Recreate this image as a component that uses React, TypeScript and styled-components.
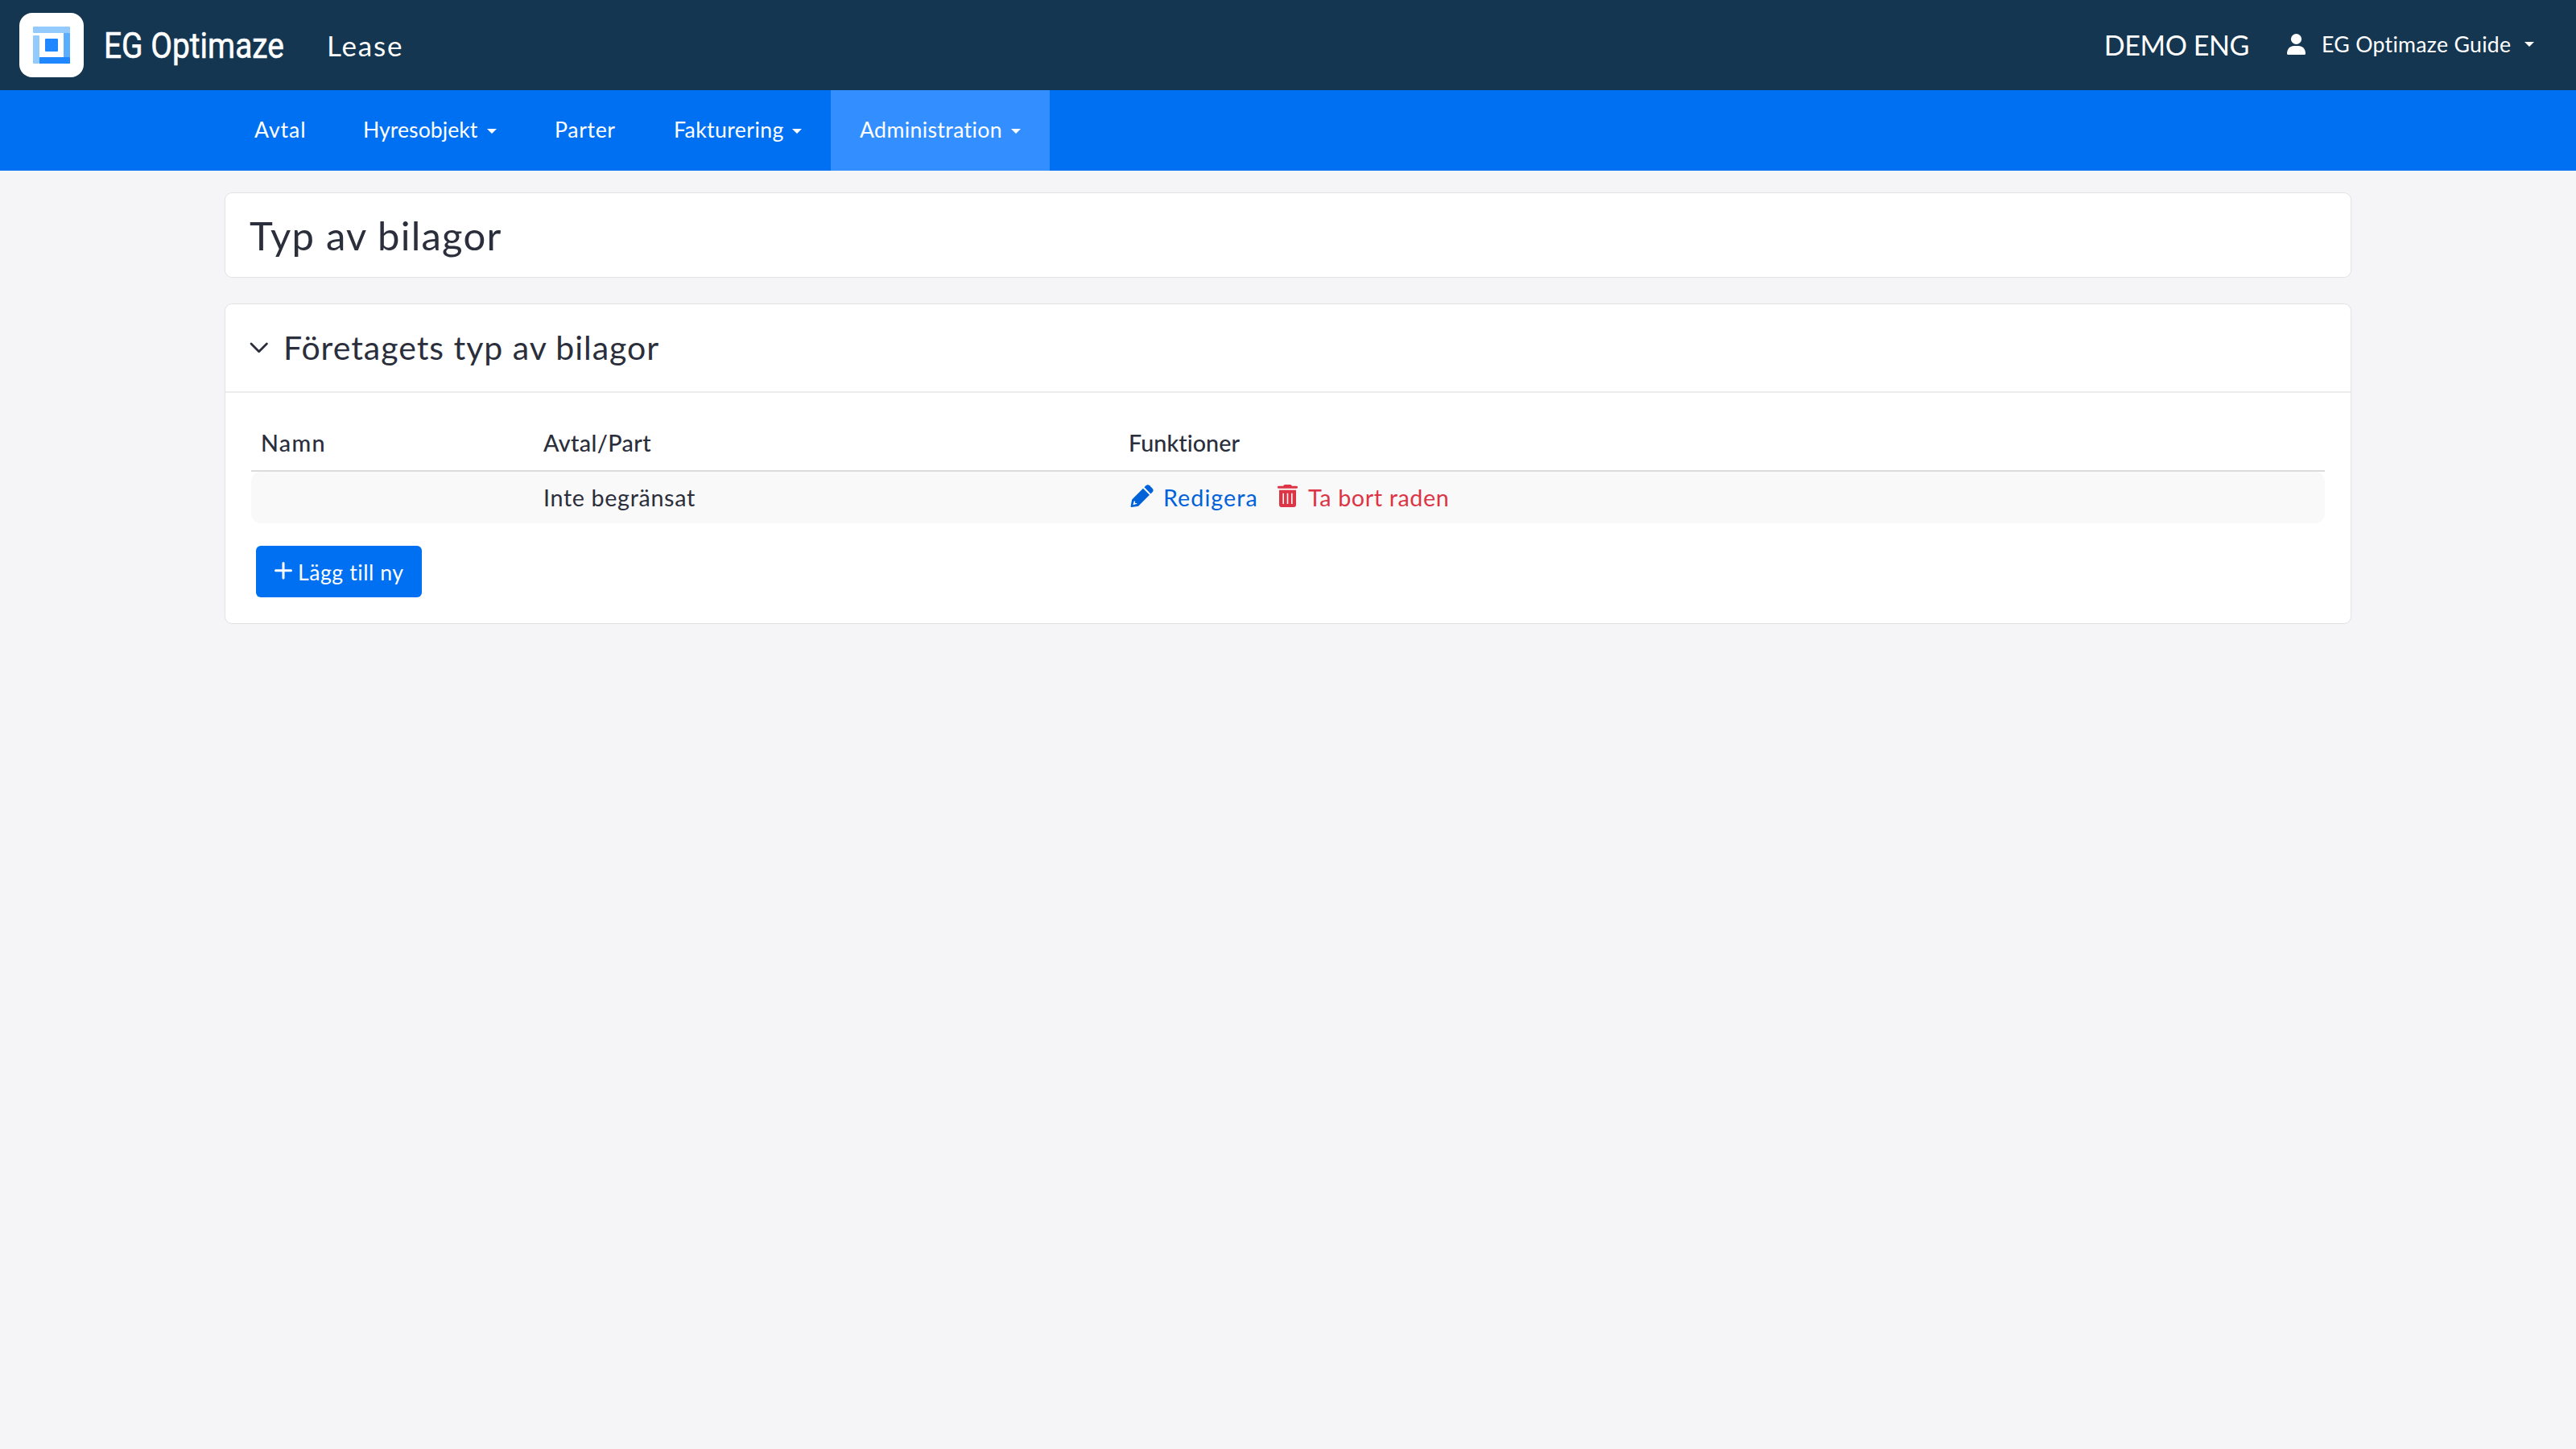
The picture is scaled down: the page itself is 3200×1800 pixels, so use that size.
import React from "react";
import styled, { createGlobalStyle } from "styled-components";

const color = {
  header: "#153650",
  nav: "#0070f3",
  navActive: "#338fff",
  page: "#f5f5f8",
  text: "#2b2e3b",
  link: "#0062d9",
  danger: "#dc3545",
};

const GlobalStyle = createGlobalStyle`
  *, *::before, *::after { box-sizing: border-box; }
  body {
    margin: 0;
    background: ${color.page};
    color: ${color.text};
    font-family: Lato, "Open Sans", sans-serif;
    font-size: 28px;
    line-height: 1.2;
  }
  svg { flex: none; }
`;

const Page = styled.div`
  min-height: 1800px;
`;

const Label = styled.span<{ $size?: number; $spacing?: number; $weight?: number }>`
  font-size: ${p => p.$size ?? 28.7}px;
  font-weight: ${p => p.$weight ?? 400};
  font-variant-ligatures: none;
  letter-spacing: ${p => p.$spacing ?? 0}px;
  white-space: nowrap;
`;

const TopBar = styled.header`
  display: flex;
  align-items: center;
  height: 112px;
  padding: 0 52px 0 24px;
  background: ${color.header};
  color: #fff;
`;

const LogoTile = styled.div`
  display: flex;
  align-items: center;
  justify-content: center;
  width: 80px;
  height: 80px;
  border-radius: 16px;
  background: #fff;
`;

const Wordmark = styled.span`
  width: 223px;
  margin-left: 25px;
  padding-top: 2px;
  font-family: Roboto, sans-serif;
  font-size: 44px;
  white-space: nowrap;
  -webkit-text-stroke: 0.6px #fff;
  transform: scaleX(0.884);
  transform-origin: left center;
`;

const Product = styled.div`
  margin-left: 54px;
`;

const Account = styled.div`
  display: flex;
  align-items: center;
  margin-left: auto;
`;

const UserMenu = styled.div`
  display: flex;
  align-items: center;
  margin-left: 47px;
  padding-bottom: 2px;

  svg {
    margin-right: 20px;
  }
`;

const Caret = styled.i`
  width: 0;
  height: 0;
  margin-left: auto;
  border: solid transparent;
  border-width: 6px 6px 0;
  border-top-color: #fff;
`;

const UserName = styled.div`
  width: 252px;
`;

const NavBar = styled.nav`
  display: flex;
  height: 100px;
  padding-left: 280px;
  background: ${color.nav};
  color: #fff;
`;

const NavItem = styled.div<{ $width: number; $active?: boolean }>`
  display: flex;
  align-items: center;
  width: ${p => p.$width}px;
  padding: 0 36px 3px;
  background: ${p => (p.$active ? color.navActive : "transparent")};

  ${Caret} {
    margin-top: 5px;
  }
`;

const Main = styled.main`
  display: flex;
  flex-direction: column;
  gap: 34px;
  width: 2640px;
  margin: 28px auto 0;
`;

const Card = styled.section`
  border-radius: 8px;
  background: #fff;
  box-shadow: 0 0 0 1px #e2e2e4;
`;

const TitleCard = styled(Card)`
  display: flex;
  align-items: center;
  height: 104px;
  padding: 0 30px 5px;
`;

const Heading = styled.h1`
  margin: 0;
  line-height: 1;
  font-weight: 400;
`;

const CardHead = styled.div`
  display: flex;
  align-items: center;
  height: 110px;
  padding: 0 30px 1px;
  border-bottom: 2px solid #ededed;

  svg {
    margin-right: 18px;
  }
`;

const CardBody = styled.div`
  padding: 26px 32px 32px;
`;

const Row = styled.div`
  display: grid;
  grid-template-columns: 351px 727px 1fr;
  align-items: center;
  height: 64px;
  padding-left: 12px;
`;

const HeadRow = styled(Row)`
  height: 72px;
  padding-top: 2px;
  border-bottom: 2px solid #dcdcdc;
`;

const BodyRow = styled(Row)`
  border-radius: 12px;
  background: #f9f9f9;
`;

const Actions = styled.div`
  display: flex;
  align-items: center;
  padding-left: 2px;
`;

const Action = styled.a<{ $color: string; $gap: number; $width: number }>`
  display: flex;
  align-items: center;
  gap: ${p => p.$gap}px;
  width: ${p => p.$width}px;
  color: ${p => p.$color};

  svg {
    margin-bottom: 4px;
  }
`;

const AddButton = styled.button`
  display: flex;
  align-items: center;
  gap: 6px;
  width: 206px;
  height: 64px;
  margin: 28px 0 0 6px;
  padding: 1px 0 0 22px;
  border: 0;
  border-radius: 6px;
  background: ${color.nav};
  color: #fff;
  font-family: inherit;
  line-height: 1.2;

  svg {
    margin-bottom: 2px;
  }
`;

const LogoMark = () => (
  <svg width="46" height="46" viewBox="0 0 46 46">
    <rect width="46" height="8" rx="1" fill="#93cbff" />
    <rect y="11" width="8" height="35" rx="1" fill="#93cbff" />
    <rect x="38" y="8" width="8" height="31" fill="#5aaeff" />
    <rect x="8" y="38" width="38" height="8" rx="0.6" fill="#1f87ff" />
    <rect x="15" y="15" width="16" height="16" rx="1" fill="#1f87ff" />
  </svg>
);

const UserIcon = () => (
  <svg width="23" height="26" viewBox="0 0 23 26" fill="#fff">
    <ellipse cx="11.5" cy="6.5" rx="6.6" ry="6.5" />
    <path d="M0 24.5C0 18.6 3.8 15 8.8 15h5.4c5 0 8.8 3.6 8.8 9.5 0 .9-.6 1.5-1.5 1.5h-20C.6 26 0 25.4 0 24.5Z" />
  </svg>
);

const ChevronIcon = () => (
  <svg width="24" height="16" viewBox="0 0 24 16" fill="none" stroke={color.text} strokeWidth="2.8" strokeLinecap="round" strokeLinejoin="round">
    <path d="M2 3l9.7 9.7L21.400 3" />
  </svg>
);

const PencilIcon = () => (
  <svg width="29" height="28" viewBox="0 0 29 28" fill={color.link}>
    <path
      fillRule="evenodd"
      d="M16 4.8l8 8L10.6 26.2Q9.900 26.900 9 27.100L1.700 28Q.5 28.100.6 27L1.900 19.700Q2.100 18.700 2.700 18.100ZM4.700 20.800L3.400 25.300 7.900 24.100 8.600 22.900H6V20.300Z"
    />
    <path d="M17.500 3.300l2-2q2.300-2.100 4.700 0l3.400 3.400q2.100 2.400 0 4.600l-2.100 2.100Z" />
  </svg>
);

const TrashIcon = () => (
  <svg width="25" height="28" viewBox="0 0 25 28" fill={color.danger}>
    <path d="M1.400 1.800H7L8.300.3Q8.600 0 9 0h7q.4 0 .7.300L18 1.800h5.600a1.400 1.400 0 010 2.900H1.400a1.400 1.400 0 010-2.900Z" />
    <path
      fillRule="evenodd"
      d="M2 6.800H23V25q0 3-3 3H5q-3 0-3-3ZM6.400 10.700V24h1.600V10.700ZM11.700 10.700V24h1.600V10.700ZM17 10.700V24h1.600V10.700Z"
    />
  </svg>
);

const PlusIcon = () => (
  <svg width="24" height="24" viewBox="0 0 24 24" stroke="#fff" strokeWidth="3" strokeLinecap="round">
    <path d="M12 1.500v18.500M2.500 10.800h19" />
  </svg>
);

const navItems = [
  { label: "Avtal", width: 135, spacing: 0.92 },
  { label: "Hyresobjekt", width: 238, spacing: 0.03, menu: true },
  { label: "Parter", width: 148, spacing: 0.66 },
  { label: "Fakturering", width: 231, spacing: 0.39, menu: true },
  { label: "Administration", width: 272, spacing: 0.37, menu: true, active: true },
];

export default function App() {
  return (
    <Page>
      <GlobalStyle />
      <TopBar>
        <LogoTile><LogoMark /></LogoTile>
        <Wordmark>EG Optimaze</Wordmark>
        <Product><Label $size={35} $spacing={1.8}>Lease</Label></Product>
        <Account>
          <Label $size={34} $spacing={-0.4}>DEMO ENG</Label>
          <UserMenu>
            <UserIcon />
            <UserName><Label $size={26.65} $spacing={0.3}>EG Optimaze Guide</Label></UserName>
            <Caret />
          </UserMenu>
        </Account>
      </TopBar>
      <NavBar>
        {navItems.map(item => (
          <NavItem key={item.label} $width={item.width} $active={item.active}>
            <Label $size={26.65} $spacing={item.spacing}>{item.label}</Label>
            {item.menu && <Caret />}
          </NavItem>
        ))}
      </NavBar>
      <Main>
        <TitleCard>
          <Heading><Label $size={49} $spacing={1.23}>Typ av bilagor</Label></Heading>
        </TitleCard>
        <Card>
          <CardHead>
            <ChevronIcon />
            <Label $size={41} $spacing={0.98}>Företagets typ av bilagor</Label>
          </CardHead>
          <CardBody>
            <HeadRow>
              <Label $weight={500} $spacing={1.3}>Namn</Label>
              <Label $weight={500} $spacing={0.4}>Avtal/Part</Label>
              <Label $weight={500} $spacing={0.05}>Funktioner</Label>
            </HeadRow>
            <BodyRow>
              <span />
              <Label $spacing={0.65}>Inte begränsat</Label>
              <Actions>
                <Action $color={color.link} $gap={12} $width={183}>
                  <PencilIcon />
                  <Label $spacing={1.05}>Redigera</Label>
                </Action>
                <Action $color={color.danger} $gap={13} $width={213}>
                  <TrashIcon />
                  <Label $spacing={0.62}>Ta bort raden</Label>
                </Action>
              </Actions>
            </BodyRow>
            <AddButton>
              <PlusIcon />
              <Label $size={26.65} $spacing={0.55}>Lägg till ny</Label>
            </AddButton>
          </CardBody>
        </Card>
      </Main>
    </Page>
  );
}
